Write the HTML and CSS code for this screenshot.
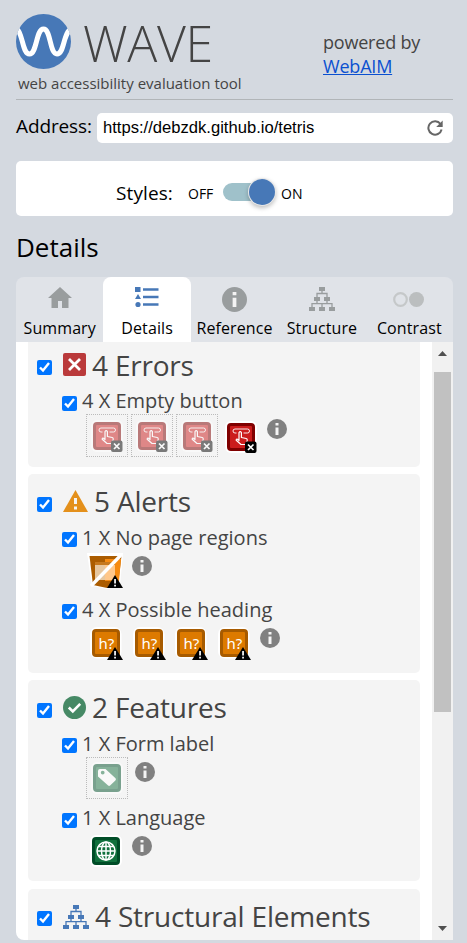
FILE: index.html
```html
<!DOCTYPE html>
<html lang="en">
<head>
<meta charset="utf-8">
<title>WAVE Details</title>
<link rel="stylesheet" href="styles.css">
</head>
<body>
<svg class="sprite" width="0" height="0">
  <symbol id="info" viewBox="0 0 20 20"><circle cx="10" cy="10" r="10" fill="currentColor"/><path class="info-mark" d="M8.500 4h3v2.600h-3zM8.500 8.500h3V16h-3z"/></symbol>
  <symbol id="tree" viewBox="0 0 26 24"><path d="M10 0h6v4h-6zM5 10h6v4H5zM15 10h6v4h-6zM0 20h6v4H0zM10 20h6v4h-6zM20 20h6v4h-6z" fill="currentColor"/><path d="M13 4v3M8 10V6.500h10V10M8 14v3M18 14v3M3 20v-3.300h20V20M13 17v3" fill="none" stroke="currentColor" stroke-width="1.300"/></symbol>
  <symbol id="button-error" viewBox="0 0 34 34"><rect x="1" y="1" width="32" height="32" rx="6" fill="#fff"/><rect x="4.500" y="4.500" width="25" height="25" rx="2.500" fill="#cb1c1c" stroke="#800000" stroke-width="3"/><path d="M12.500 13h-1.500a2 2 0 0 1 0-4h12.500a2 2 0 0 1 0 4h-4" fill="none" stroke="#fff" stroke-width=".9"/><path d="M15 20.500V12.500q1.200-1.800 2.400 0v5l4.800 1q1.200.3 1 1.700l-.9 4.300h-5.300l-4.800-4.300q0-1.500 1.400-1z" fill="none" stroke="#fff" stroke-width="1.200" stroke-linejoin="round"/><rect x="21" y="21.500" width="11.500" height="11.500" rx="2" fill="#000"/><path d="M24 24.500l5.500 5.500M29.500 24.500L24 30" stroke="#fff" stroke-width="1.700"/></symbol>
  <symbol id="warn-badge" viewBox="0 0 16 13"><path d="M8 0l8 13H0z" fill="#000"/><path d="M7.200 4h1.700v4.500H7.200zM7.200 9.700h1.700v1.700H7.200z" fill="#fff"/></symbol>
  <symbol id="heading-tile" viewBox="0 0 34 34"><rect x="1" y="1" width="31.500" height="31.500" rx="7" fill="#fff"/><rect x="4.500" y="4.500" width="25" height="25" rx="2.500" fill="#dd7a00" stroke="#a75b00" stroke-width="3"/></symbol>
  <symbol id="regions-alert" viewBox="0 0 37 36"><path d="M0 0h36l-3 32-13 4-15-3z" fill="#fff"/><path d="M2.500 3h32l-3.500 29-11 3-14-3z" fill="#ab5c00"/><path d="M18 6h16l-2 22H18z" fill="#f68a10"/><path d="M8 9h20v18H8z" fill="#e6c7a0"/><path d="M18 11h10v16H18z" fill="#ffc78a"/><path d="M8 9h20v3H8z" fill="#c5781e"/><path d="M4 33L34 2" stroke="#fff" stroke-width="3.400"/><use href="#warn-badge" x="20" y="22" width="16" height="13"/></symbol>
  <symbol id="label-feature" viewBox="0 0 34 34"><rect x="1" y="1" width="32" height="32" rx="6" fill="#fff"/><rect x="4.500" y="4.500" width="25" height="25" rx="2.500" fill="#1a7343" stroke="#00512b" stroke-width="3"/><path fill-rule="evenodd" d="M8 10q0-2 2-2h5.500l10 9.300q1 1-.1 2.100l-5.300 5.200q-1 .9-2 0L8 15.500zm4.700-.3a1.900 1.900 0 1 0 0 3.800 1.900 1.900 0 0 0 0-3.800z" fill="#fff"/></symbol>
  <symbol id="lang-feature" viewBox="0 0 34 34"><rect x="1" y="1" width="32" height="32" rx="6" fill="#fff"/><rect x="4.500" y="4.500" width="25" height="25" rx="2.500" fill="#11713d" stroke="#004d27" stroke-width="3"/><g fill="none" stroke="#fff" stroke-width="1.500"><circle cx="17" cy="17" r="9"/><ellipse cx="17" cy="17" rx="4.500" ry="9"/><path d="M17 8v18M8 17h18M9.300 12.500h15.400M9.300 21.500h15.400"/></g></symbol>
</svg>

<header class="header">
  <div class="brand">
    <div class="brand-row">
      <svg class="logo" viewBox="0 0 55 55"><defs><clipPath id="disc"><circle cx="27.500" cy="27.500" r="27.500"/></clipPath></defs><circle cx="27.500" cy="27.500" r="27.500" fill="#4778b7"/><path clip-path="url(#disc)" d="M0 14C7 18 6 40 13.500 40S20 15 27.500 15 33.500 40 41 40 47 18 56 14" fill="none" stroke="#fff" stroke-width="5"/></svg>
      <span class="wordmark">WAVE</span>
    </div>
    <div class="tagline">web accessibility evaluation tool</div>
  </div>
  <div class="powered">powered by<br><a href="#">WebAIM</a></div>
</header>

<div class="address">
  <span class="address-label">Address:</span>
  <div class="address-field"><span class="address-url">https://debzdk.github.io/tetris</span>
    <svg class="refresh" viewBox="0 0 16 16"><path d="M13.500 4A6.700 6.700 0 1 0 14.600 9.500" fill="none" stroke="#666" stroke-width="2"/><path d="M15.700.5V7H9.200z" fill="#666"/></svg>
  </div>
</div>

<div class="styles-box">
  <span class="styles-label">Styles:</span><span class="state off">OFF</span>
  <span class="toggle"><span class="knob"></span></span><span class="state on">ON</span>
</div>

<h2 class="title">Details</h2>

<nav class="tabs">
  <div class="tab"><svg viewBox="0 0 24 21" width="24" height="21"><path d="M12 0l12 11h-3.500v10H14v-7h-4v7H3.500V11H0z" fill="currentColor"/></svg><span>Summary</span></div>
  <div class="tab active"><svg viewBox="0 0 24 21" width="24" height="21"><path d="M0 0h5.500v5H0zM3 7l3 5H0z" fill="currentColor"/><circle cx="3" cy="17.500" r="2.600" fill="currentColor"/><path d="M8 2.500h15.500M8 10h15.500M8 17.500h15.500" stroke="currentColor" stroke-width="2.600"/></svg><span>Details</span></div>
  <div class="tab"><svg width="25" height="25"><use href="#info"/></svg><span>Reference</span></div>
  <div class="tab"><svg width="26" height="24"><use href="#tree"/></svg><span>Structure</span></div>
  <div class="tab"><svg viewBox="0 0 32 25" width="32" height="25"><circle cx="7.500" cy="12.500" r="6.300" fill="none" stroke="#c5c8c9" stroke-width="2.200"/><circle cx="23.500" cy="12.500" r="7.500" fill="#bbbebf"/></svg><span>Contrast</span></div>
</nav>

<main class="panel">
  <div class="list">
    <section class="group errors">
      <div class="group-head"><input type="checkbox" checked><svg viewBox="0 0 23 23" width="23" height="23"><rect width="23" height="23" rx="2" fill="#ba3a3b"/><path d="M6 6l11 11M17 6L6 17" stroke="#fff" stroke-width="2.800"/></svg><h3>4 Errors</h3></div>
      <div class="item">
        <div class="item-head"><input type="checkbox" checked><span>4 X Empty button</span></div>
        <div class="icons">
          <span class="cell"><svg><use href="#button-error"/></svg></span><span class="cell"><svg><use href="#button-error"/></svg></span><span class="cell"><svg><use href="#button-error"/></svg></span>
          <svg class="icon"><use href="#button-error"/></svg>
          <svg class="info"><use href="#info"/></svg>
        </div>
      </div>
    </section>

    <section class="group alerts">
      <div class="group-head"><input type="checkbox" checked><svg viewBox="0 0 25 22" width="25" height="22"><path d="M12.500 0L25 22H0z" fill="#e4901b"/><path d="M11 8h3v6h-3zM11 16.500h3v3h-3z" fill="#f4f4f4"/></svg><h3>5 Alerts</h3></div>
      <div class="item">
        <div class="item-head"><input type="checkbox" checked><span>1 X No page regions</span></div>
        <div class="icons"><svg class="icon regions"><use href="#regions-alert"/></svg><svg class="info"><use href="#info"/></svg></div>
      </div>
      <div class="item">
        <div class="item-head"><input type="checkbox" checked><span>4 X Possible heading</span></div>
        <div class="icons">
          <svg class="icon"><use href="#heading-tile"/><text x="9.500" y="22.500" class="glyph">h?</text><use href="#warn-badge" x="18" y="21" width="16" height="13"/></svg>
          <svg class="icon"><use href="#heading-tile"/><text x="9.500" y="22.500" class="glyph">h?</text><use href="#warn-badge" x="18" y="21" width="16" height="13"/></svg>
          <svg class="icon"><use href="#heading-tile"/><text x="9.500" y="22.500" class="glyph">h?</text><use href="#warn-badge" x="18" y="21" width="16" height="13"/></svg>
          <svg class="icon"><use href="#heading-tile"/><text x="9.500" y="22.500" class="glyph">h?</text><use href="#warn-badge" x="18" y="21" width="16" height="13"/></svg>
          <svg class="info"><use href="#info"/></svg>
        </div>
      </div>
    </section>

    <section class="group features">
      <div class="group-head"><input type="checkbox" checked><svg viewBox="0 0 23 23" width="23" height="23"><circle cx="11.500" cy="11.500" r="11.500" fill="#468965"/><path d="M5.800 11.500l4 4 7.400-7.700" fill="none" stroke="#fff" stroke-width="2.600"/></svg><h3>2 Features</h3></div>
      <div class="item">
        <div class="item-head"><input type="checkbox" checked><span>1 X Form label</span></div>
        <div class="icons"><span class="cell"><svg><use href="#label-feature"/></svg></span><svg class="info after-cell"><use href="#info"/></svg></div>
      </div>
      <div class="item language">
        <div class="item-head"><input type="checkbox" checked><span>1 X Language</span></div>
        <div class="icons"><svg class="icon"><use href="#lang-feature"/></svg><svg class="info"><use href="#info"/></svg></div>
      </div>
    </section>

    <section class="group structural">
      <div class="group-head"><input type="checkbox" checked><svg width="26" height="24"><use href="#tree"/></svg><h3>4 Structural Elements</h3></div>
    </section>
  </div>
  <div class="scrollbar">
    <svg viewBox="0 0 9 5" width="9" height="5"><path d="M4.500 0L9 5H0z" fill="#505050"/></svg>
    <div class="thumb"></div>
    <svg class="down" viewBox="0 0 9 5" width="9" height="5"><path d="M0 0h9L4.500 5z" fill="#505050"/></svg>
  </div>
</main>
</body>
</html>
```

FILE: styles.css
```css
* { box-sizing: border-box; }

body {
  margin: 0;
  padding: 0 14px 0 16px;
  height: 943px;
  overflow: hidden;
  background: #d4d9e0;
  color: #000;
  font-family: "Open Sans", sans-serif;
  font-weight: 400;
}

svg { display: block; flex: none; }
.sprite { position: absolute; }

.header {
  display: flex;
  height: 100px;
  padding-top: 14px;
  border-bottom: 1px solid #b1b5b8;
  color: #444;
}
.brand { width: 307px; }
.brand-row { display: flex; height: 55px; }
.logo { width: 55px; height: 55px; }
.wordmark {
  height: 50px;
  margin: 4px 0 0 12px;
  font-size: 50px;
  font-weight: 300;
  line-height: 50px;
  letter-spacing: -.3px;
}
.tagline { padding-left: 2px; font-size: 15px; line-height: 29px; white-space: nowrap; }
.powered { padding-top: 16px; font-size: 18px; line-height: 24px; letter-spacing: -.2px; white-space: nowrap; }
.powered a { color: #0b50d0; }

.address { display: flex; margin-top: 13px; height: 30px; }
.address-label { width: 81px; font-size: 19px; line-height: 27px; letter-spacing: -.12px; white-space: nowrap; }
.address-field {
  display: flex;
  flex: 1;
  justify-content: space-between;
  padding: 0 10px 0 6px;
  border-radius: 5px;
  background: #fff;
}
.address-url { font: 16.6px/29px "Liberation Sans", sans-serif; }
.refresh { width: 16px; height: 16px; margin-top: 7px; }

.styles-box {
  display: flex;
  height: 55px;
  margin-top: 18px;
  padding-left: 100px;
  border-radius: 5px;
  background: #fff;
}
.styles-label { width: 72px; font-size: 19px; line-height: 65px; letter-spacing: .1px; }
.state { font-size: 14px; line-height: 66px; }
.off { width: 35px; }
.toggle {
  display: flex;
  justify-content: flex-end;
  align-items: center;
  width: 52px;
  height: 18px;
  margin: 22px 6px 0 0;
  border-radius: 9px;
  background: #9fc1ca;
}
.knob {
  flex: none;
  width: 26px;
  height: 26px;
  border-radius: 50%;
  background: #4778b7;
  box-shadow: 0 0 0 1px #e8e8e8, 0 2px 4px 1px rgba(0, 0, 0, .25);
}

.title { margin: 12px 0 0; font-size: 26px; font-weight: 400; line-height: 38px; height: 49px; }

.tabs {
  display: flex;
  height: 65px;
  border-radius: 8px 8px 0 0;
  background: #e0e3e8;
}
.tab {
  display: flex;
  flex: 1 1 0;
  flex-direction: column;
  align-items: center;
  justify-content: space-between;
  min-width: 0;
  padding-top: 10px;
  color: #999d9e;
}
.tab span { height: 27px; font-size: 16px; line-height: 26px; letter-spacing: .1px; color: #000; }
.active { border-radius: 8px 8px 0 0; background: #fff; color: #4778b7; }

.info-mark { fill: #f4f4f4; }

.panel {
  display: flex;
  height: 598px;
  overflow: hidden;
  border-radius: 0 0 0 8px;
  background: #fff;
}
.list { width: 392px; height: 598px; margin: 0 auto 0 12px; overflow: hidden; }
.group { border-radius: 5px; background: #f4f4f4; color: #444; }
.errors { height: 130px; margin-top: -5px; }
.alerts { height: 199px; margin-top: 7px; }
.features { height: 201px; margin-top: 7px; }
.structural { height: 90px; margin-top: 8px; }
.structural svg { color: #4778b7; margin-top: 14px; }

input[type="checkbox"] { flex: none; width: 15px; height: 15px; margin: 0; }
.group-head { display: flex; height: 46px; padding-left: 9px; }
.group-head input { margin: 23px 11px 0 0; }
.group-head svg { margin-top: 16px; }
.group-head h3 {
  margin: 4px 0 0 6px;
  font-size: 28px;
  font-weight: 400;
  line-height: 46px;
  letter-spacing: -.2px;
  white-space: nowrap;
}
.errors h3 { margin-top: 5px; }
.structural input { margin-top: 22px; }

.item { height: 72px; }
.features .item { height: 75px; }
.item-head { display: flex; height: 30px; padding-left: 34px; font-size: 20px; line-height: 30px; white-space: nowrap; }
.item-head input { margin: 12px 5px 0 0; }
.item-head span { margin-top: 3px; }
.language .item-head span { margin-top: 2px; }
.language .icons { margin-top: -1px; }

.icons { display: flex; align-items: flex-start; padding-left: 58px; }
.cell {
  width: 42px;
  height: 42px;
  margin: 1px 3px 0 0;
  padding: 3px;
  border: 1px dotted #bbb;
}
.errors .cell { height: 43px; padding-top: 4px; }
.cell svg { width: 34px; height: 34px; opacity: .5; }
.icon { width: 34px; height: 34px; margin: 4px 5.600px 0 3px; }
.errors .item-head input { margin-top: 13px; }
.errors .icon { margin-top: 7px; }
.regions { width: 37px; height: 36px; margin: 3px 4.600px 0 1px; }
.info { width: 20px; height: 20px; margin: 6px 0 0 3.400px; color: #808080; }
.after-cell { margin-left: 4px; }

.glyph { font: 400 15px "Noto Sans", sans-serif; fill: #fff; }

.scrollbar {
  display: flex;
  flex-direction: column;
  align-items: center;
  width: 21px;
  padding: 9px 0 10px;
  background: #f1f1f1;
}
.thumb { width: 17px; height: 340px; margin-top: 16px; background: #c1c1c1; }
.down { margin-top: auto; margin-bottom: -1px; }
```
